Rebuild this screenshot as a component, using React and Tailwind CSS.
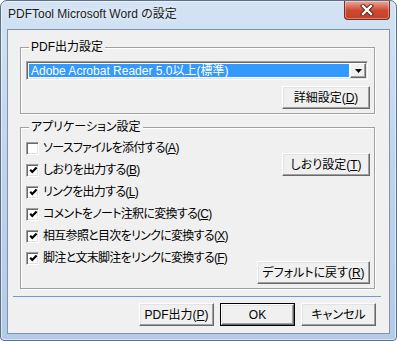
import React from "react";

const font = "font-['Liberation_Sans','Noto_Sans_CJK_JP',sans-serif] [font-feature-settings:'palt']";

function Btn({ w, def, children, className = "" }) {
  const face = (
    <div className="flex h-full w-full items-center justify-center border border-t-white border-l-white border-r-[#696969] border-b-[#696969] bg-[#f0f0f0] shadow-[inset_-1px_-1px_0_#a0a0a0,inset_1px_1px_0_#e3e3e3]">
      <span className="leading-[14px]">{children}</span>
    </div>
  );
  return (
    <div className={`h-[23px] shrink-0 ${def ? "border border-black" : ""} ${className}`} style={{ width: w }}>
      {face}
    </div>
  );
}

function Check({ checked, children }) {
  return (
    <div className="flex h-[22px] items-center gap-[4px]">
      <span className="flex h-[13px] w-[13px] items-center justify-center border border-t-[#a0a0a0] border-l-[#a0a0a0] border-b-white border-r-white bg-white shadow-[inset_1px_1px_0_#696969,inset_-1px_-1px_0_#e3e3e3]">
        {checked && (
          <svg width="9" height="9" viewBox="0 0 9 9" className="ml-[1px] mt-[1px]">
            <polyline points="1.2,3.8 3.3,6 7.6,1.6" fill="none" stroke="#000" strokeWidth="2.2" />
          </svg>
        )}
      </span>
      <span className="leading-[14px] tracking-[-0.7px]">{children}</span>
    </div>
  );
}

export default function App() {
  return (
    <div className={`h-[341px] w-[397px] bg-white text-[12px] text-black ${font}`}>
      <div className="flex h-full flex-col rounded-t-[7px] rounded-b-[4px] border border-[#5d6f86] bg-gradient-to-b from-[#d3e3f4] via-[#bed4ec] to-[#b3cbe7] shadow-[inset_0_0_0_1px_rgba(255,255,255,0.55)]">
        {/* title bar */}
        <div className="flex h-[28px] shrink-0 items-start justify-between">
          <div className="mt-[6px] pl-[7px] text-[12px] leading-[15px] text-[#1b1b1b] [text-shadow:0_0_6px_#fff]">
            PDFTool Microsoft Word の設定
          </div>
          <div className="mr-[6px] flex h-[19px] w-[46px] items-center justify-center rounded-b-[4px] border border-t-0 border-[#7b2a1e] bg-gradient-to-b from-[#e9a99b] via-[#cf4a33] to-[#c2402a] shadow-[inset_0_0_0_1px_rgba(255,255,255,0.35)]">
            <svg width="14" height="12" viewBox="0 0 14 12">
              <path d="M3 2 L11 10 M11 2 L3 10" stroke="#5a1d14" strokeWidth="4.2" strokeLinecap="square" />
              <path d="M3 2 L11 10 M11 2 L3 10" stroke="#fff" strokeWidth="2.4" strokeLinecap="square" />
            </svg>
          </div>
        </div>

        {/* client area */}
        <div className="mx-[6px] h-[305px] shrink-0 border border-[#7f93aa] bg-[#f0f0f0]">
          <div className="flex flex-col pt-[10px]">
            <fieldset className="ml-[12px] w-[355px] border border-[#a0a0a0] pb-[4px] shadow-[inset_1px_1px_0_#fff,1px_1px_0_#fff]">
              <legend className="ml-[8px] bg-[#f0f0f0] px-[2px] leading-[14px]">PDF出力設定</legend>
              <div className="ml-[5px] mt-[7px] flex h-[19px] w-[342px] border border-t-[#a0a0a0] border-l-[#a0a0a0] border-b-white border-r-white bg-white shadow-[inset_1px_1px_0_#696969,inset_-1px_-1px_0_#e3e3e3]">
                <div className="m-[2px] mr-0 flex flex-1 items-center bg-[#3399ff] pl-[2px] leading-[14px] text-white">
                  Adobe Acrobat Reader 5.0以上(標準)
                </div>
                <div className="m-[1px] ml-[1px] flex w-[16px] items-center justify-center border border-t-white border-l-white border-r-[#696969] border-b-[#696969] bg-[#f0f0f0] shadow-[inset_-1px_-1px_0_#a0a0a0]">
                  <svg width="7" height="4" viewBox="0 0 7 4">
                    <polygon points="0,0 7,0 3.5,4" fill="#000" />
                  </svg>
                </div>
              </div>
              <div className="mt-[6px] flex justify-end pr-[4px]">
                <Btn w={88}>
                  詳細設定(<u>D</u>)
                </Btn>
              </div>
            </fieldset>

            <fieldset className="ml-[12px] mt-[6px] w-[355px] border border-[#a0a0a0] pb-[4px] shadow-[inset_1px_1px_0_#fff,1px_1px_0_#fff]">
              <legend className="ml-[8px] bg-[#f0f0f0] px-[2px] leading-[14px]">アプリケーション設定</legend>
              <div className="flex">
                <div className="mt-[3px] flex flex-col pl-[5px]">
                  <Check>ソースファイルを添付する(<u>A</u>)</Check>
                  <Check checked>しおりを出力する(<u>B</u>)</Check>
                  <Check checked>リンクを出力する(<u>L</u>)</Check>
                  <Check checked>コメントをノート注釈に変換する(<u>C</u>)</Check>
                  <Check checked>相互参照と目次をリンクに変換する(<u>X</u>)</Check>
                  <Check checked>脚注と文末脚注をリンクに変換する(<u>F</u>)</Check>
                </div>
                <div className="ml-auto mr-[4px] flex flex-col items-end">
                  <Btn w={88} className="mt-[19px]">
                    しおり設定(<u>T</u>)
                  </Btn>
                  <Btn w={113} className="mt-[85px]">
                    デフォルトに戻す(<u>R</u>)
                  </Btn>
                </div>
              </div>
            </fieldset>

            <div className="ml-[5px] mt-[7px] h-px w-[368px] bg-[#6d9ad6]" />

            <div className="mt-[6px] flex justify-end gap-[6px] pr-[13px]">
              <Btn w={75}>
                PDF出力(<u>P</u>)
              </Btn>
              <Btn w={75} def>
                OK
              </Btn>
              <Btn w={75}>キャンセル</Btn>
            </div>
          </div>
        </div>
      </div>
    </div>
  );
}
